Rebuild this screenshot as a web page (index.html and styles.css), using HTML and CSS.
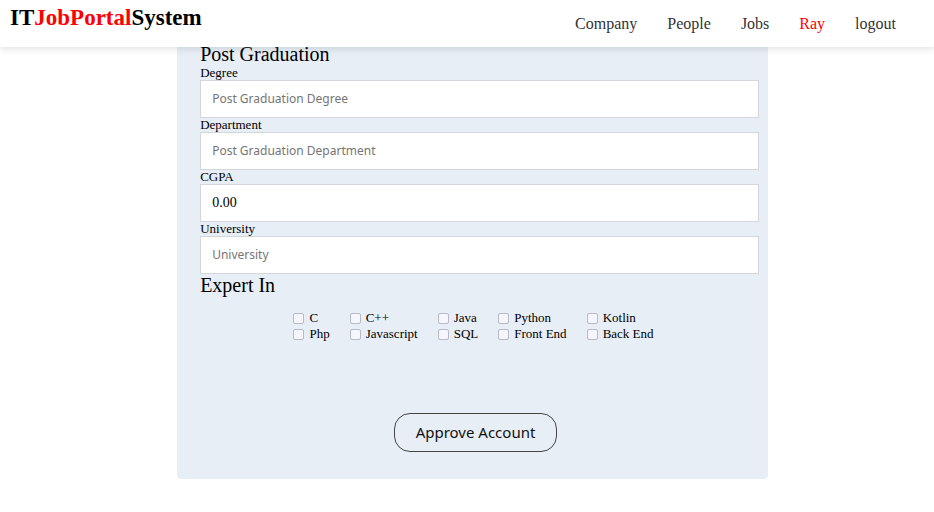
FILE: index.html
```html
<!DOCTYPE html>
<html lang="en">
<head>
<meta charset="utf-8">
<meta name="viewport" content="width=device-width, initial-scale=1">
<title>IT Job Portal System</title>
<link rel="stylesheet" href="styles.css">
</head>
<body>
<header class="site-header">
  <a class="brand" href="#">IT<span class="accent">JobPortal</span>System</a>
  <nav class="nav">
    <a href="#">Company</a>
    <a href="#">People</a>
    <a href="#">Jobs</a>
    <a class="accent" href="#">Ray</a>
    <a href="#">logout</a>
  </nav>
</header>
<main>
  <form class="card">
    <div class="fields">
      <h2>Post Graduation</h2>
      <label for="degree">Degree</label>
      <input id="degree" type="text" placeholder="Post Graduation Degree">
      <label for="department">Department</label>
      <input id="department" type="text" placeholder="Post Graduation Department">
      <label for="cgpa">CGPA</label>
      <input id="cgpa" class="serif" type="text" value="0.00">
      <label for="university">University</label>
      <input id="university" type="text" placeholder="University">
      <h2>Expert In</h2>
    </div>
    <div class="skills">
      <label><input type="checkbox">C</label>
      <label><input type="checkbox">C++</label>
      <label><input type="checkbox">Java</label>
      <label><input type="checkbox">Python</label>
      <label><input type="checkbox">Kotlin</label>
      <label><input type="checkbox">Php</label>
      <label><input type="checkbox">Javascript</label>
      <label><input type="checkbox">SQL</label>
      <label><input type="checkbox">Front End</label>
      <label><input type="checkbox">Back End</label>
    </div>
    <div class="actions">
      <button type="submit">Approve Account</button>
    </div>
  </form>
</main>
</body>
</html>
```
FILE: styles.css
```css
* {
  box-sizing: border-box;
}

body {
  margin: 0;
  background: #fff;
  color: #000;
  font-family: "Liberation Serif", serif;
}

a {
  color: inherit;
  text-decoration: none;
}

.site-header {
  position: sticky;
  top: 0;
  z-index: 1;
  display: flex;
  justify-content: space-between;
  align-items: flex-start;
  padding: 6px 38px 13px 10px;
  background: #fff;
  box-shadow: 0 1px 8px rgba(0, 0, 0, 0.15);
}

.brand {
  font-size: 23px;
  font-weight: bold;
  line-height: 24px;
}

.nav {
  display: flex;
  gap: 30px;
  padding-top: 8px;
  color: #333;
  font-size: 16px;
  line-height: 20px;
}

.accent {
  color: #f00;
}

main {
  padding-left: 11px;
}

.card {
  width: 64%;
  margin: -4px auto 0;
  padding-bottom: 27px;
  border-radius: 4px;
  background: #e7eef6;
}

.fields {
  padding: 0 9px 0 23px;
}

h2 {
  margin: 0;
  font-size: 20px;
  font-weight: normal;
  line-height: 23px;
}

.fields label {
  display: block;
  font-size: 13px;
  line-height: 14px;
}

.fields input {
  display: block;
  width: 100%;
  height: 38px;
  padding: 0 11px 1px;
  border: 1px solid #d3d6da;
  background: #fff;
  color: #000;
  font-family: "Noto Sans", sans-serif;
  font-size: 12px;
}

.fields .serif {
  font-family: "Liberation Serif", serif;
  font-size: 14px;
}

.fields input::placeholder {
  color: #757575;
}

.skills {
  display: grid;
  grid-template-columns: repeat(5, auto);
  justify-content: center;
  column-gap: 20px;
  padding: 13px 0 0 2px;
}

.skills label {
  display: flex;
  align-items: center;
  gap: 5px;
  font-size: 13px;
  line-height: 16px;
}

.skills input {
  appearance: none;
  width: 11px;
  height: 11px;
  margin: 0;
  border: 1px solid #b8bac6;
  border-radius: 2px;
  background: #f4f6fc;
}

.skills input:checked {
  background: #333;
}

.actions {
  display: flex;
  justify-content: center;
  padding: 71px 0 0 6px;
}

button {
  padding: 8px 21px;
  border: 1px solid #444;
  border-radius: 16px;
  background: transparent;
  color: #111;
  font-family: "Noto Sans", sans-serif;
  font-size: 15px;
  line-height: 21px;
}
```
